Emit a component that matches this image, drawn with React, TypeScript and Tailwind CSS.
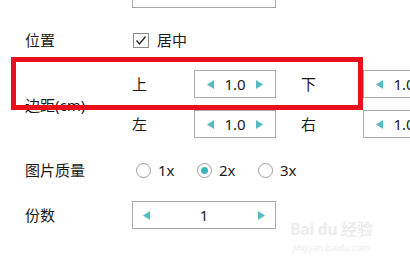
import React from 'react';

// Small teal arrow used by the spin boxes
const Arrow = ({ dir }: { dir: 'left' | 'right' }) => (
    <svg width="7" height="9" viewBox="0 0 7 9" className="shrink-0">
        {dir === 'left' ? (
            <polygon points="7,0 7,9 0,4.5" fill="#56bcc4" />
        ) : (
            <polygon points="0,0 0,9 7,4.5" fill="#56bcc4" />
        )}
    </svg>
);

const Spin = ({ value, wide = false }: { value: string; wide?: boolean }) => (
    <div
        className={`flex h-[28px] shrink-0 items-center justify-between border border-[#a8a8a8] bg-white ${
            wide ? 'w-[144px] px-[10px]' : 'w-[82px] px-[12px]'
        }`}
    >
        <Arrow dir="left" />
        <span className="text-[15px] leading-none text-[#1a1a1a]">{value}</span>
        <Arrow dir="right" />
    </div>
);

const Radio = ({ label, checked = false }: { label: string; checked?: boolean }) => (
    <div className="flex w-[61px] shrink-0 items-center">
        <span className="flex h-[15px] w-[15px] items-center justify-center rounded-full border border-[#9c9c9c]">
            {checked && <span className="h-[7px] w-[7px] rounded-full bg-[#3db5bd]" />}
        </span>
        <span className="ml-[7px] text-[15px] leading-none text-[#1a1a1a]">{label}</span>
    </div>
);

const MarginRow = ({ a, b }: { a: string; b: string }) => (
    <div className="flex h-[28px] items-center">
        <span className="w-[62px] shrink-0 text-[15px] text-[#1a1a1a]">{a}</span>
        <Spin value="1.0" />
        <span className="ml-[25px] w-[62px] shrink-0 text-[15px] text-[#1a1a1a]">{b}</span>
        <Spin value="1.0" />
    </div>
);

export default function App() {
    return (
        <div className="relative h-[265px] w-[410px] overflow-hidden bg-white font-['Noto_Sans','Noto_Sans_CJK_SC',sans-serif] text-[#1a1a1a]">
            {/* previous field, cut off at the top */}
            <div className="ml-[132px] mt-[-20px] h-[28px] w-[144px] border border-[#a8a8a8]" />

            {/* 位置 */}
            <div className="mt-[19px] flex h-[26px] items-center">
                <span className="w-[132px] shrink-0 pl-[25px] text-[15px]">位置</span>
                <span className="ml-[1px] flex h-[15px] w-[16px] items-center justify-center border border-[#8c8c8c]">
                    <svg width="12" height="11" viewBox="0 0 12 11">
                        <polyline points="1.5,5.5 4.5,9 10.5,1.5" fill="none" stroke="#222" strokeWidth="1.3" />
                    </svg>
                </span>
                <span className="ml-[8px] text-[15px]">居中</span>
            </div>

            {/* 边距(cm) */}
            <div className="mt-[17px] flex w-max items-center">
                <span className="w-[132px] shrink-0 pl-[25px] pt-[2px] text-[15px]">边距(cm)</span>
                <div className="flex shrink-0 flex-col gap-[12px]">
                    <MarginRow a="上" b="下" />
                    <MarginRow a="左" b="右" />
                </div>
            </div>

            {/* 图片质量 */}
            <div className="mt-[18px] flex h-[28px] items-center">
                <span className="w-[136px] shrink-0 pl-[25px] text-[15px]">图片质量</span>
                <Radio label="1x" />
                <Radio label="2x" checked />
                <Radio label="3x" />
            </div>

            {/* 份数 */}
            <div className="mt-[17px] flex h-[28px] items-center">
                <span className="w-[132px] shrink-0 pl-[25px] text-[15px]">份数</span>
                <Spin value="1" wide />
            </div>

            {/* red highlight frame */}
            <div className="pointer-events-none absolute left-[11px] top-[57px] h-[53px] w-[352px] border-[5px] border-[#e8101a]" />

            {/* faint watermark */}
            <div className="pointer-events-none absolute left-[290px] top-[220px] flex flex-col items-center gap-[5px] text-[#ededed]">
                <span className="text-[16px] font-bold leading-[18px] tracking-tight">Bai du 经验</span>
                <span className="text-[9px] leading-[10px]">jingyan.baidu.com</span>
            </div>
        </div>
    );
}
